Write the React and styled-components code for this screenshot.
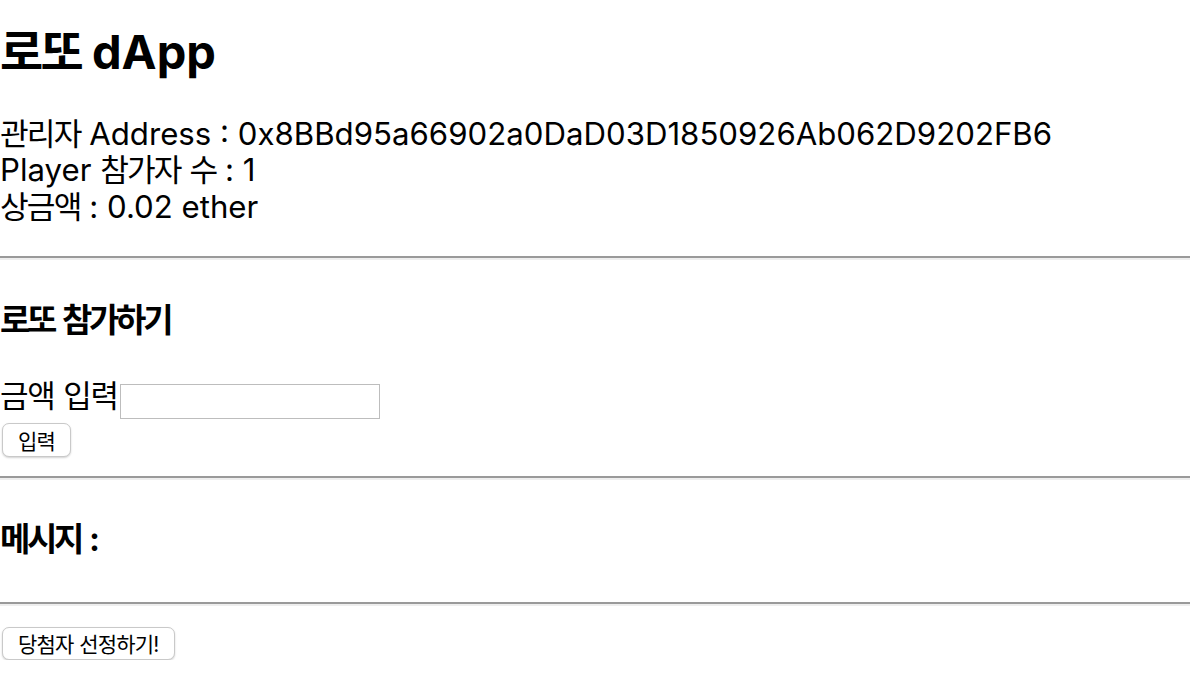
import React, { useState } from 'react'
import styled, { createGlobalStyle } from 'styled-components'

const GlobalStyle = createGlobalStyle`
  body {
    margin: 0;
    background: #fff;
    color: #000;
    font-family: Inter, "Liberation Sans", "Noto Sans CJK KR", sans-serif;
  }
`

const Page = styled.div`
  display: flex;
  flex-direction: column;
  align-items: flex-start;
`

// 한글 글자폭을 좁혀 맞추는 span
const Ko = styled.span`
  font-family: "Noto Sans CJK KR", sans-serif;
  letter-spacing: ${(p) => p.$tight || '-0.06em'};
`

const Title = styled.h1`
  margin: 22px 0 0;
  font-size: 47px;
  line-height: 54px;
  font-weight: 700;
`

const Info = styled.div`
  margin-top: 36px;
  font-size: 31.2px;
  line-height: 34.3px;
`

const Divider = styled.hr`
  align-self: stretch;
  margin: ${(p) => p.$top}px 0 0;
  height: 0;
  border: 0;
  border-top: 2px solid #9a9a9a;
  border-bottom: 2px solid #eeeeee;
`

const Heading = styled.h3`
  margin: ${(p) => p.$top}px 0 0;
  font-size: 33px;
  line-height: 40px;
  font-weight: 700;
`

const FormRow = styled.div`
  display: flex;
  align-items: flex-start;
  margin-top: 36px;
  font-size: 31px;
  line-height: 35px;
`

const AmountInput = styled.input`
  box-sizing: border-box;
  width: 260px;
  height: 35px;
  margin: 8px 0 0 2px;
  padding: 0 6px;
  border: 1px solid #bdbdbd;
  border-radius: 0;
  font-size: 20px;
  outline: none;
`

const Button = styled.button`
  box-sizing: border-box;
  height: ${(p) => p.$h || 34}px;
  margin: ${(p) => p.$top}px 0 0 2px;
  padding: 0 15px;
  background: #fff;
  border: 1px solid #c9c9c9;
  border-radius: 7px;
  box-shadow: 0 1px 2px rgba(0, 0, 0, 0.18);
  font-family: inherit;
  font-size: 21px;
  color: #000;
  cursor: pointer;
`

export default function App() {
  const [amount, setAmount] = useState('')
  const manager = '0x8BBd95a66902a0DaD03D1850926Ab062D9202FB6'

  return (
    <Page>
      <GlobalStyle />
      <Title><Ko>로또</Ko> dApp</Title>
      <Info>
        <div><Ko>관리자</Ko> Address : {manager}</div>
        <div>Player <Ko>참가자</Ko> <Ko>수</Ko> : 1</div>
        <div><Ko>상금액</Ko> : 0.02 ether</div>
      </Info>
      <Divider $top={32} />
      <Heading $top={38}><Ko $tight="-0.1em">로또</Ko> <Ko $tight="-0.1em">참가하기</Ko></Heading>
      <FormRow>
        <span><Ko $tight="-0.04em">금액</Ko> <Ko $tight="-0.04em">입력</Ko></span>
        <AmountInput value={amount} onChange={(e) => setAmount(e.target.value)} />
      </FormRow>
      <Button $top={4}><Ko $tight="-0.04em">입력</Ko></Button>
      <Divider $top={19} />
      <Heading $top={37}><Ko $tight="-0.1em">메시지</Ko> :</Heading>
      <Divider $top={43} />
      <Button $top={21} $h={33}><Ko $tight="-0.04em">당첨자</Ko> <Ko $tight="-0.04em">선정하기</Ko>!</Button>
    </Page>
  )
}
